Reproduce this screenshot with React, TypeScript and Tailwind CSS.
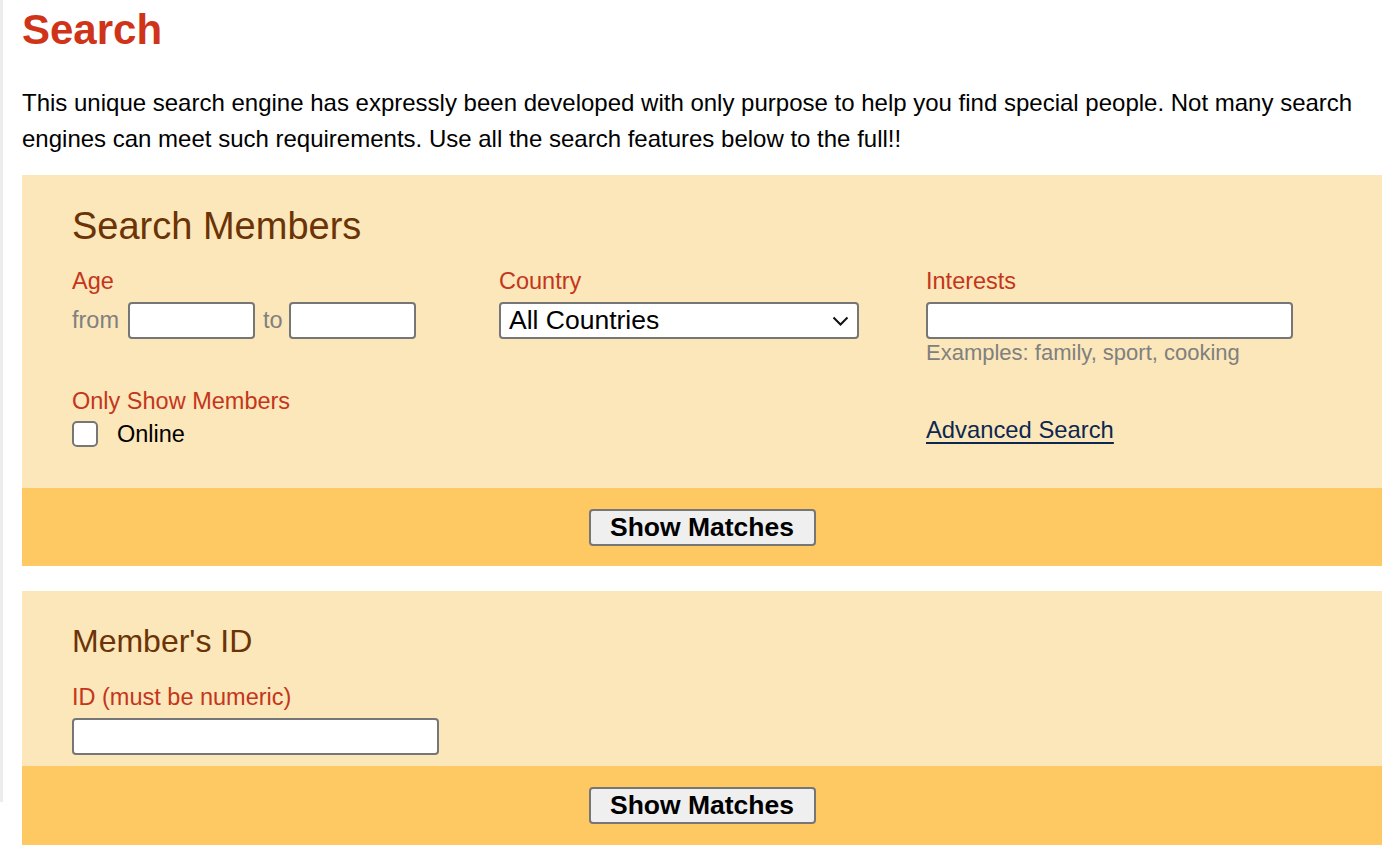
const font = { fontFamily: '"Liberation Sans", Arial, sans-serif' };

function ShowMatchesBar({ height }: { height: string }) {
  return (
    <div className={`flex items-center justify-center bg-[#fec862] ${height}`}>
      <button
        type="button"
        className="h-[37px] w-[227px] rounded-[4px] border-2 border-[#767676] bg-[#efefef] text-[26.5px] font-bold leading-none text-black"
      >
        Show Matches
      </button>
    </div>
  );
}

function TextInput({ className }: { className: string }) {
  return (
    <input
      type="text"
      className={`h-[37px] rounded-[4px] border-2 border-[#767676] bg-white px-2 ${className}`}
    />
  );
}

export default function App() {
  return (
    <div className="flex min-h-[862px] bg-white text-black" style={font}>
      <div className="h-[802px] w-[3px] shrink-0 bg-[#ececec]" />
      <main className="ml-[19px] w-[1360px]">
        <h1 className="pt-[6px] text-[42px] font-bold leading-[48px] text-[#cf3419]">
          Search
        </h1>
        <p className="mt-[31px] pr-[4px] text-[24px] leading-[36px]">
          This unique search engine has expressly been developed with only purpose to help you find
          special people. Not many search engines can meet such requirements. Use all the search
          features below to the full!!
        </p>

        <section className="mt-[18px]">
          <div className="h-[313px] bg-[#fbe7b9] pl-[50px] pt-[29px]">
            <h2 className="text-[38px] leading-[44px] text-[#6b3306]">Search Members</h2>
            <div className="mt-[20px] grid grid-cols-[427px_427px_427px]">
              <div>
                <div className="text-[23.5px] leading-[26px] text-[#c4361c]">Age</div>
                <div className="mt-[8px] flex items-center text-[23.5px] text-[#808080]">
                  <span>from</span>
                  <TextInput className="ml-[9px] w-[127px]" />
                  <span className="ml-[8px]">to</span>
                  <TextInput className="ml-[6px] w-[127px]" />
                </div>
              </div>
              <div>
                <div className="text-[23.5px] leading-[26px] text-[#c4361c]">Country</div>
                <div className="mt-[8px] h-[37px] w-[360px] rounded-[4px] border-2 border-[#767676] bg-white">
                  <div className="flex h-full items-center justify-between pl-[8px] pr-[8px]">
                    <span className="text-[26.5px] leading-none">All Countries</span>
                    <svg width="17" height="10" viewBox="0 0 17 10" fill="none">
                      <path d="M1.5 1.5l7 7 7-7" stroke="#111" strokeWidth="2" />
                    </svg>
                  </div>
                </div>
              </div>
              <div>
                <div className="text-[23.5px] leading-[26px] text-[#c4361c]">Interests</div>
                <TextInput className="mt-[8px] block w-[367px]" />
                <div className="mt-[1px] text-[22px] leading-[26px] text-[#808080]">
                  Examples: family, sport, cooking
                </div>
              </div>
            </div>
            <div className="mt-[22px] grid grid-cols-[854px_427px]">
              <div>
                <div className="text-[23.5px] leading-[26px] text-[#c4361c]">Only Show Members</div>
                <label className="mt-[7px] flex items-center">
                  <span className="block h-[26px] w-[26px] rounded-[5px] border-2 border-[#767676] bg-white" />
                  <span className="ml-[19px] text-[23.5px] leading-[26px]">Online</span>
                </label>
              </div>
              <div className="pt-[29px]">
                <a href="#" className="text-[23.8px] leading-[26px] text-[#0d2750] underline underline-offset-[4px]">
                  Advanced Search
                </a>
              </div>
            </div>
          </div>
          <ShowMatchesBar height="h-[78px]" />
        </section>

        <section className="mt-[25px]">
          <div className="h-[175px] bg-[#fbe7b9] pl-[50px] pt-[32px]">
            <h2 className="text-[32px] leading-[36px] text-[#6b3306]">Member&apos;s ID</h2>
            <div className="mt-[25px] text-[23.5px] leading-[26px] text-[#c4361c]">
              ID (must be numeric)
            </div>
            <TextInput className="mt-[8px] block w-[367px]" />
          </div>
          <ShowMatchesBar height="h-[79px]" />
        </section>
      </main>
    </div>
  );
}
